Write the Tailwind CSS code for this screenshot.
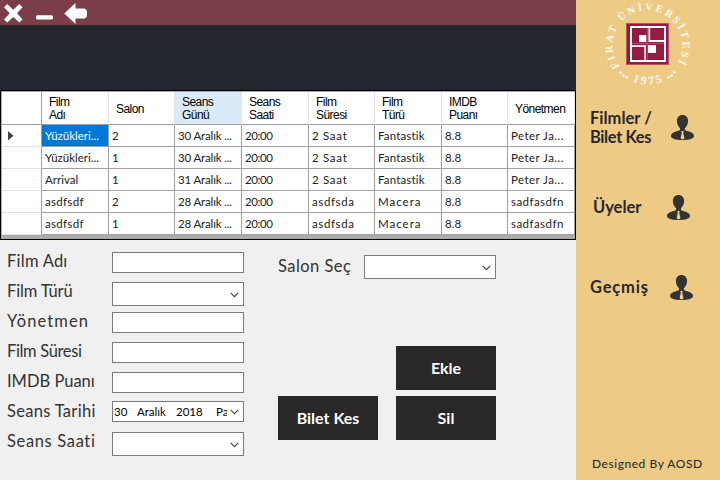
<!DOCTYPE html>
<html lang="tr">
<head>
<meta charset="utf-8">
<title>Sinema</title>
<script src="https://cdn.jsdelivr.net/npm/@tailwindcss/browser@4"></script>
</head>
<body class="w-[720px] h-[480px] overflow-hidden flex bg-[#f0f0f0] font-['Lato',sans-serif] text-[#222222]">
<svg class="hidden">
  <symbol id="user" viewBox="0 0 23 25">
    <path fill="#333" d="M11.5 0C15 0 17.3 2.6 17.1 6.2C17 9.600 15.200 11.500 14 13.200C13.600 14.300 14.200 15.300 15.500 15.800C20 17 23 18.500 23 21C23 23.500 18.500 25 11.500 25C4.500 25 0 23.500 0 21C0 18.500 3 17 7.500 15.800C8.800 15.300 9.400 14.300 9 13.200C7.800 11.500 6 9.600 5.900 6.200C5.700 2.600 8 0 11.500 0Z"/>
    <path fill="#f0cf8c" d="M10.300 16H12.700L12.200 17.800L13.500 23.400L11.500 24.600L9.600 23.400L10.800 17.800Z"/>
  </symbol>
  <symbol id="chev" viewBox="0 0 9 6"><path d="M.7 .8L4.500 4.600L8.300 .8" fill="none" stroke="#444" stroke-width="1.200"/></symbol>
</svg>
<main class="w-[576px] h-full flex flex-col">
  <header class="h-[25px] bg-[#7b3e49] flex">
    <svg width="100" height="25" viewBox="0 0 100 25" fill="#fff">
      <path d="M7.300 4L13.300 9.700L19.300 4L22.600 7.200L17 13.300L22.600 19.400L19.300 22.600L13.300 17L7.300 22.600L4 19.400L9.700 13.300L4 7.200Z"/>
      <rect x="36" y="15.300" width="17" height="4.300" rx="1.500"/>
      <path d="M64.300 13.500L75.500 3V8.400H84.500Q87 9 87 13.500Q87 18 84.500 18.500H75.500V24Z"/>
    </svg>
  </header>
  <div class="h-[65px] bg-[#24262e]"></div>
  <section class="h-[150px] bg-[#ababab] border border-black pt-px pl-px">
    <div id="grid" class="grid grid-cols-[40px_67px_66px_67px_67px_66px_67px_66px_67px] grid-rows-[33px_repeat(5,22px)] text-[11.5px]"></div>
  </section>
  <section class="h-[240px] flex">
    <div class="w-[244px] pl-[7px] pt-[12px] flex flex-col text-[16.500px] leading-[20px] text-[#333333] whitespace-nowrap">
      <div class="h-[30px] flex items-start"><span class="w-[105px] -mt-px tracking-[0.250px]">Film Adı</span><div class="w-[132px] h-[21px] bg-white border border-[#7a7a7a]"></div></div>
      <div class="h-[30px] flex items-start"><span class="w-[105px] -mt-px tracking-[-0.150px]">Film Türü</span><div class="w-[132px] h-[24px] bg-white border border-[#7a7a7a] flex items-center justify-end pr-[4px] pt-px"><svg class="w-[9px] h-[6px]"><use href="#chev"/></svg></div></div>
      <div class="h-[30px] flex items-start"><span class="w-[105px] -mt-px tracking-[1.100px]">Yönetmen</span><div class="w-[132px] h-[21px] bg-white border border-[#7a7a7a]"></div></div>
      <div class="h-[30px] flex items-start"><span class="w-[105px] -mt-px tracking-[-0.350px]">Film Süresi</span><div class="w-[132px] h-[21px] bg-white border border-[#7a7a7a]"></div></div>
      <div class="h-[30px] flex items-start"><span class="w-[105px] -mt-px">IMDB Puanı</span><div class="w-[132px] h-[21px] bg-white border border-[#7a7a7a]"></div></div>
      <div class="h-[30px] flex items-start"><span class="w-[105px] -mt-px tracking-[0.300px]">Seans Tarihi</span><div class="w-[132px] h-[21px] -mt-px bg-white border border-[#7a7a7a] flex items-center justify-between pr-[4px] pl-px text-[11.500px] text-black"><div class="w-[113px] flex overflow-hidden leading-[18px]"><span class="w-[23px] shrink-0">30</span><span class="w-[39px] shrink-0">Aralık</span><span class="w-[40px] shrink-0">2018</span><span>Pazar</span></div><svg class="w-[9px] h-[6px] shrink-0"><use href="#chev"/></svg></div></div>
      <div class="h-[30px] flex items-start"><span class="w-[105px] -mt-px tracking-[0.650px]">Seans Saati</span><div class="w-[132px] h-[24px] bg-white border border-[#7a7a7a] flex items-center justify-end pr-[4px] pt-px"><svg class="w-[9px] h-[6px]"><use href="#chev"/></svg></div></div>
    </div>
    <div class="ml-[34px] w-[218px] pt-[15px]">
      <div class="h-[91px] flex items-start text-[16.500px] leading-[20px] text-[#333333]"><span class="w-[86px] mt-px tracking-[0.450px]">Salon Seç</span><div class="w-[132px] h-[24px] bg-white border border-[#7a7a7a] flex items-center justify-end pr-[4px] pt-px"><svg class="w-[9px] h-[6px]"><use href="#chev"/></svg></div></div>
      <div class="grid grid-cols-[100px_100px] gap-x-[18px] gap-y-[6px] text-white font-bold text-[16px]">
        <button class="col-start-2 h-[44px] bg-[#292728]">Ekle</button>
        <button class="col-start-1 h-[44px] bg-[#292728]">Bilet Kes</button>
        <button class="h-[44px] bg-[#292728]">Sil</button>
      </div>
    </div>
  </section>
</main>
<aside class="w-[144px] h-full bg-[#eecb85] flex flex-col">
  <svg class="shrink-0" width="144" height="100" viewBox="0 0 144 100">
    <defs>
      <path id="ringTop" d="M43.600 66.500A35 35 0 1 1 99.400 66.500"/>
      <path id="ringLow" d="M42.700 72.500A41 41 0 0 0 100.700 72.500"/>
    </defs>
    <g fill="#fffaf0" font-family="Liberation Serif" font-weight="bold">
      <text font-size="10.500"><textPath href="#ringTop" textLength="150">FIRAT ÜNİVERSİTESİ</textPath></text>
      <text font-size="11.500" text-anchor="middle" letter-spacing="2.500"><textPath href="#ringLow" startOffset="51.500%">1975</textPath></text>
    </g>
    <g fill="#fffaf0">
      <circle cx="44.600" cy="72.500" r="1.300"/><circle cx="47.500" cy="75.500" r="1.300"/><circle cx="50.800" cy="77.300" r="1.300"/>
      <circle cx="98.400" cy="72.500" r="1.300"/><circle cx="95.500" cy="75.500" r="1.300"/><circle cx="92.200" cy="77.300" r="1.300"/>
    </g>
    <rect x="50" y="23" width="43" height="42" fill="#b9545c"/>
    <rect x="51" y="24" width="41" height="40" fill="#951b42"/>
    <rect x="55" y="27" width="34" height="34" fill="#951b42" stroke="#fff" stroke-width="2"/>
    <path fill="#fff" d="M72.500 28h1.700v12H88v2H72.500zM63 35h7.300v7H63zM72 45h8v8h-8zM56 45.300H70V60h-1.700V47H56z"/>
    <path stroke="#c8849a" stroke-width=".5" d="M71.300 28V60M56 43.500H88"/>
  </svg>
  <nav class="h-[350px] font-bold text-[16.500px] leading-[19px] text-[#29272a]">
    <div class="h-[54px] flex pl-[14px] pt-[9px]"><span class="w-[81px]">Filmler /<br><span class="tracking-[-0.400px]">Bilet Kes</span></span><svg class="w-[23px] h-[25px] mt-[6px]"><use href="#user"/></svg></div>
    <div class="h-[80px] flex pl-[17px] pt-[41px]"><span class="w-[74px] mt-[3px]">Üyeler</span><svg class="w-[23px] h-[25px] shrink-0"><use href="#user"/></svg></div>
    <div class="h-[80px] flex pl-[14px] pt-[41px]"><span class="w-[80px] mt-[3px] tracking-[0.800px]">Geçmiş</span><svg class="w-[23px] h-[25px] shrink-0"><use href="#user"/></svg></div>
  </nav>
  <footer class="pl-[16px] pt-[6px] text-[12px] leading-[16px] tracking-[0.550px]">Designed By AOSD</footer>
</aside>
<script>
const heads = ['', 'Film<br>Adı', 'Salon', 'Seans<br>Günü', 'Seans<br>Saati', 'Film<br>Süresi', 'Film<br>Türü', 'IMDB<br>Puanı', 'Yönetmen'];
const rows = [
  ['Yüzükleri...', '2', '30 Aralık ...', '20:00', '2 Saat', 'Fantastik', '8.8', 'Peter Ja...'],
  ['Yüzükleri...', '1', '30 Aralık ...', '20:00', '2 Saat', 'Fantastik', '8.8', 'Peter Ja...'],
  ['Arrival', '1', '31 Aralık ...', '20:00', '2 Saat', 'Fantastik', '8.8', 'Peter Ja...'],
  ['asdfsdf', '2', '28 Aralık ...', '20:00', 'asdfsda', 'Macera', '8.8', 'sadfasdfn'],
  ['asdfsdf', '1', '28 Aralık ...', '20:00', 'asdfsda', 'Macera', '8.8', 'sadfasdfn']
];
const spacing = {
  'asdfsdf': 'tracking-[0.300px]',
  '30 Aralık ...': 'tracking-[-0.150px]',
  '31 Aralık ...': 'tracking-[-0.150px]',
  '28 Aralık ...': 'tracking-[-0.150px]',
  '20:00': 'tracking-[-0.400px]',
  '2 Saat': 'tracking-[0.700px]',
  'asdfsda': 'tracking-[0.600px]',
  'Fantastik': 'tracking-[0.150px]',
  'Macera': 'tracking-[1px]',
  'Peter Ja...': 'tracking-[0.450px]',
  'sadfasdfn': 'tracking-[0.450px]'
};
let html = '';
heads.forEach((h, i) => {
  const edge = i === 0 ? 'border-r-[#a0a0a0]' : 'border-r-[#e3e3e3]';
  html += `<div class="border-r border-b border-b-[#a0a0a0] ${edge} ${i === 3 ? 'bg-[#d9ebf9]' : 'bg-white'} pl-[7px] pt-[2px] flex items-center font-['Liberation_Sans',sans-serif] text-[12px] leading-[13px] tracking-[-0.550px] text-black">${h}</div>`;
});
rows.forEach((r, n) => {
  html += `<div class="bg-white border-r border-r-[#a0a0a0] border-b border-b-[#e3e3e3] pl-[6px] flex items-center">${n === 0 ? '<svg width="6" height="10"><path d="M0 0L5.500 4.700L0 9.500Z" fill="#444"/></svg>' : ''}</div>`;
  r.forEach((c, i) => {
    html += `<div class="border-r border-b border-[#a0a0a0] pl-[3px] flex items-center whitespace-nowrap overflow-hidden ${spacing[c] || ''} ${n === 0 && i === 0 ? 'bg-[#0078d7] text-white' : 'bg-white'}">${c}</div>`;
  });
});
document.getElementById('grid').innerHTML = html;
</script>
</body>
</html>
